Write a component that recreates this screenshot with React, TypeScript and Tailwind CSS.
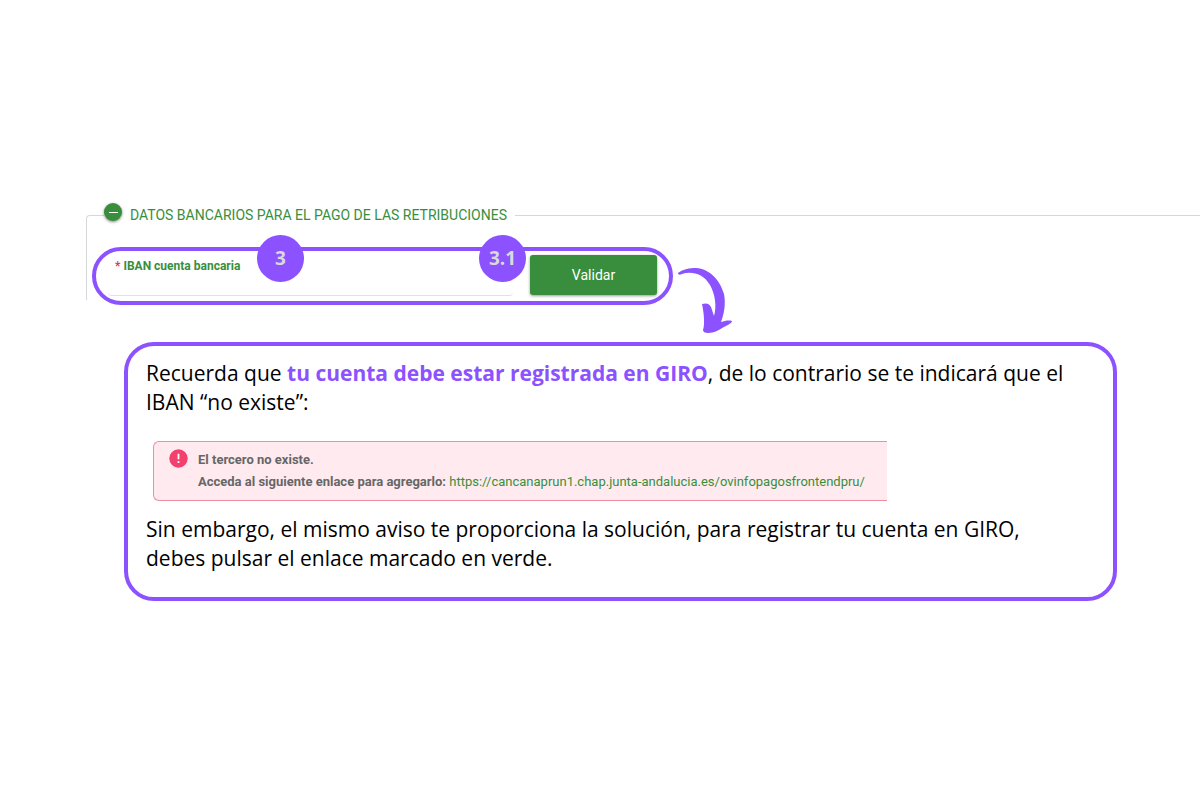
function CurvedArrow() {
    return (
        <svg className="mt-5 -mb-9 ml-1 h-[68px] w-[56px] shrink-0 fill-[#8c52ff]" viewBox="0 0 56 68" aria-hidden="true">
            <path d="M1 6 C6 2 13 1 19 1 C33 2 43 13 47 27 C49 37 47 47 44 55 C48 54 51 53 55 54 C55 56 51 58 47 60 C42 63 37 66 31 66 C28 66 26 65 26 63 C28 58 27 46 25 37 C29 36 32 36 34 40 L37 49 C40 39 38 27 33 18 C26 6 14 4 5 7 C3 8 1 8 1 6 Z" />
        </svg>
    );
}

function StepBadge({ children, className }: { children: string; className: string }) {
    return (
        <span className={`absolute flex size-[47px] items-center justify-center rounded-full bg-[#8c52ff] text-[19px] font-bold text-[#d9d9d9] ${className}`}>
            {children}
        </span>
    );
}

function DatosBancarios() {
    return (
        <fieldset className="ml-[86px] min-w-0 rounded-tl border-t border-l border-[#d5d8da] font-['Roboto',sans-serif]">
            <legend className="ml-[17px] flex h-6 items-center gap-2 pr-2 text-[14px] text-[#388e3c]">
                <button type="button" aria-label="Contraer sección" className="mb-[6px] flex size-[18px] items-center justify-center rounded-full bg-[#388e3c] shadow-[0_1px_3px_rgba(0,0,0,0.5)]">
                    <span className="h-px w-[9px] bg-white" />
                </button>
                DATOS BANCARIOS PARA EL PAGO DE LAS RETRIBUCIONES
            </legend>
            <div className="mt-5 -mb-[5px] ml-[5px] flex items-start">
                <div className="relative flex h-[58px] w-full max-w-[581px] items-start justify-between rounded-full border-4 border-[#8c52ff] px-3 pt-1">
                    <div className="w-[405px] rounded-b-sm border-b border-[#dfe1e3] pt-[3px] pl-[7px]">
                        <label htmlFor="iban" className="block text-[12px] leading-4 font-bold text-[#388e3c]">
                            <span className="text-[#e8305a]">*</span> IBAN cuenta bancaria
                        </label>
                        <input id="iban" type="text" className="block h-[21px] w-full text-[14px] outline-none" />
                    </div>
                    <button type="button" className="h-[40px] w-[127px] rounded-[3px] bg-[#388e3c] text-[14px] text-white shadow-[0_1px_3px_rgba(0,0,0,0.4)]">
                        Validar
                    </button>
                    <StepBadge className="-top-4 left-[161px] font-['Open_Sans',sans-serif]">3</StepBadge>
                    <StepBadge className="-top-4 left-[383px] font-['Open_Sans',sans-serif]">3.1</StepBadge>
                </div>
                <CurvedArrow />
            </div>
        </fieldset>
    );
}

function AvisoError() {
    return (
        <div role="alert" className="mt-6 ml-[7px] flex max-w-[734px] gap-[10px] rounded-l-md border border-r-0 border-[#ee8ea3] bg-[#ffebef] py-[7px] pl-[15px] font-['Roboto',sans-serif] text-[13px] leading-[22px]">
            <svg className="size-[19px] shrink-0" viewBox="0 0 19 19" aria-hidden="true">
                <circle cx="9.5" cy="9.5" r="9.2" fill="#f1416c" />
                <path d="M9.5 4.8v5.4M9.5 12v2" stroke="#fff" strokeWidth="1.8" />
            </svg>
            <div className="font-bold text-[#666]">
                <p>El tercero no existe.</p>
                <p>
                    Acceda al siguiente enlace para agregarlo:{" "}
                    <a href="https://cancanaprun1.chap.junta-andalucia.es/ovinfopagosfrontendpru/" className="font-normal text-[#388e3c]">
                        https://cancanaprun1.chap.junta-andalucia.es/ovinfopagosfrontendpru/
                    </a>
                </p>
            </div>
        </div>
    );
}

export default function App() {
    return (
        <main className="bg-white pt-[203px] font-['Open_Sans',sans-serif]">
            <DatosBancarios />
            <section className="mt-[42px] mr-[83px] ml-[124px] rounded-[30px] border-4 border-[#8c52ff] pt-[13px] pr-9 pb-6 pl-[18px] text-[21px] leading-[29px] text-black">
                <p>
                    Recuerda que <strong className="font-bold text-[#8c52ff]">tu cuenta debe estar registrada en GIRO</strong>, de lo contrario se te indicará que el
                    <br />
                    IBAN “no existe”:
                </p>
                <AvisoError />
                <p className="mt-[14px]">
                    Sin embargo, el mismo aviso te proporciona la solución, para registrar tu cuenta en GIRO, debes pulsar el enlace marcado en verde.
                </p>
            </section>
        </main>
    );
}
